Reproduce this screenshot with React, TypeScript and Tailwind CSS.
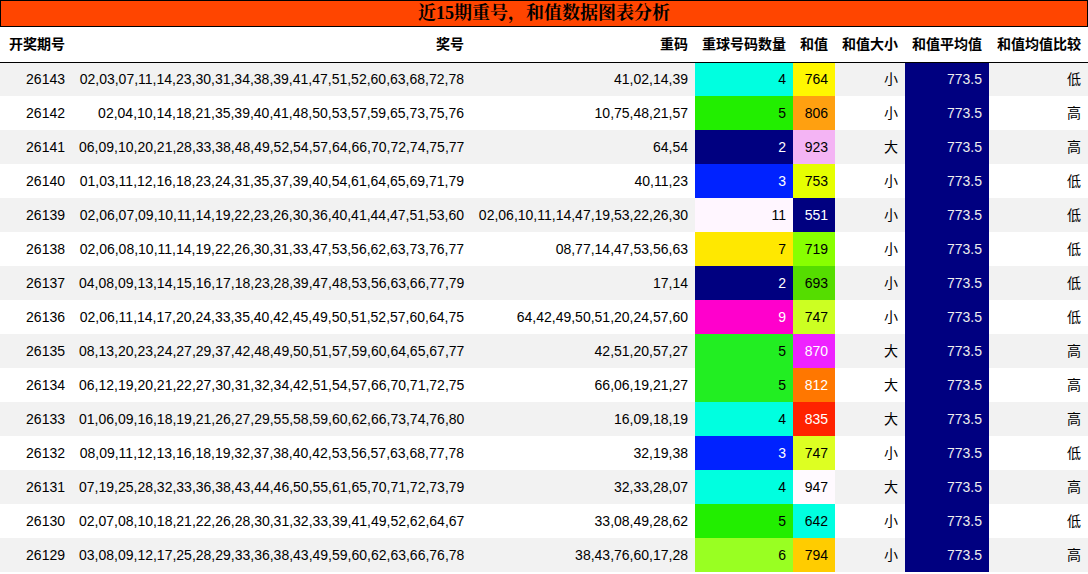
const rows: [string,string,string,string,string,string,string,string,string,string,string][] = [
["26143","02,03,07,11,14,23,30,31,34,38,39,41,47,51,52,60,63,68,72,78","41,02,14,39","4","bg-[#00ffe0] text-black","764","bg-[#fff700] text-black","小","低"],
["26142","02,04,10,14,18,21,35,39,40,41,48,50,53,57,59,65,73,75,76","10,75,48,21,57","5","bg-[#22ee00] text-black","806","bg-[#ffa010] text-black","小","高"],
["26141","06,09,10,20,21,28,33,38,48,49,52,54,57,64,66,70,72,74,75,77","64,54","2","bg-[#000080] text-white","923","bg-[#f4b4f4] text-black","大","高"],
["26140","01,03,11,12,16,18,23,24,31,35,37,39,40,54,61,64,65,69,71,79","40,11,23","3","bg-[#0022ff] text-white","753","bg-[#e6ff00] text-black","小","低"],
["26139","02,06,07,09,10,11,14,19,22,23,26,30,36,40,41,44,47,51,53,60","02,06,10,11,14,47,19,53,22,26,30","11","bg-[#fff6ff] text-black","551","bg-[#000080] text-white","小","低"],
["26138","02,06,08,10,11,14,19,22,26,30,31,33,47,53,56,62,63,73,76,77","08,77,14,47,53,56,63","7","bg-[#ffe800] text-black","719","bg-[#88ff00] text-black","小","低"],
["26137","04,08,09,13,14,15,16,17,18,23,28,39,47,48,53,56,63,66,77,79","17,14","2","bg-[#000080] text-white","693","bg-[#55dd00] text-black","小","低"],
["26136","02,06,11,14,17,20,24,33,35,40,42,45,49,50,51,52,57,60,64,75","64,42,49,50,51,20,24,57,60","9","bg-[#ff00cc] text-white","747","bg-[#ccff22] text-black","小","低"],
["26135","08,13,20,23,24,27,29,37,42,48,49,50,51,57,59,60,64,65,67,77","42,51,20,57,27","5","bg-[#22ee22] text-black","870","bg-[#ee22ff] text-white","大","高"],
["26134","06,12,19,20,21,22,27,30,31,32,34,42,51,54,57,66,70,71,72,75","66,06,19,21,27","5","bg-[#22ee22] text-black","812","bg-[#ff7700] text-white","大","高"],
["26133","01,06,09,16,18,19,21,26,27,29,55,58,59,60,62,66,73,74,76,80","16,09,18,19","4","bg-[#00ffe0] text-black","835","bg-[#ff2200] text-white","大","高"],
["26132","08,09,11,12,13,16,18,19,32,37,38,40,42,53,56,57,63,68,77,78","32,19,38","3","bg-[#0022ff] text-white","747","bg-[#ddff22] text-black","小","低"],
["26131","07,19,25,28,32,33,36,38,43,44,46,50,55,61,65,70,71,72,73,79","32,33,28,07","4","bg-[#00ffe0] text-black","947","bg-[#fffaff] text-black","大","高"],
["26130","02,07,08,10,18,21,22,26,28,30,31,32,33,39,41,49,52,62,64,67","33,08,49,28,62","5","bg-[#22ee00] text-black","642","bg-[#00ffe0] text-black","小","低"],
["26129","03,08,09,12,17,25,28,29,33,36,38,43,49,59,60,62,63,66,76,78","38,43,76,60,17,28","6","bg-[#99ff22] text-black","794","bg-[#ffcc00] text-black","小","高"],
] as any;

export default function App() {
  const th = "h-[35px] px-[7px] text-right font-bold text-[14px] text-black whitespace-nowrap";
  const td = "h-[34px] px-[7px] text-right text-[14px] whitespace-nowrap";
  return (
    <div className="w-[1088px] h-[574px] overflow-hidden bg-white" style={{fontFamily: '"Liberation Sans","Noto Sans CJK SC",sans-serif'}}>
      <div className="h-[27px] bg-[#ff4500] border border-black flex items-center justify-center font-bold text-[18px] text-black" style={{fontFamily: '"Liberation Serif","Noto Serif CJK SC","Noto Sans CJK SC",serif'}}>近15期重号，和值数据图表分析</div>
      <table className="border-collapse table-fixed w-[1088px]">
        <colgroup>
          <col className="w-[72px]"/><col className="w-[399px]"/><col className="w-[224px]"/><col className="w-[98px]"/><col className="w-[42px]"/><col className="w-[70px]"/><col className="w-[84px]"/><col className="w-[99px]"/>
        </colgroup>
        <thead>
          <tr className="border-b border-black">
            {["开奖期号","奖号","重码","重球号码数量","和值","和值大小","和值平均值","和值均值比较"].map(h=> <th key={h} className={th}>{h}</th>)}
          </tr>
        </thead>
        <tbody>
          {rows.map((r:any,i:number)=>(
            <tr key={r[0]} className={i%2===0?"bg-[#f2f2f2]":"bg-white"}>
              <td className={td}>{r[0]}</td>
              <td className={td}>{r[1]}</td>
              <td className={td}>{r[2]}</td>
              <td className={td+" "+r[4]}>{r[3]}</td>
              <td className={td+" "+r[6]}>{r[5]}</td>
              <td className={td}>{r[7]}</td>
              <td className={td+" bg-[#000080] text-[#eeeeee]"}>773.5</td>
              <td className={td}>{r[8]}</td>
            </tr>
          ))}
        </tbody>
      </table>
    </div>
  );
}
